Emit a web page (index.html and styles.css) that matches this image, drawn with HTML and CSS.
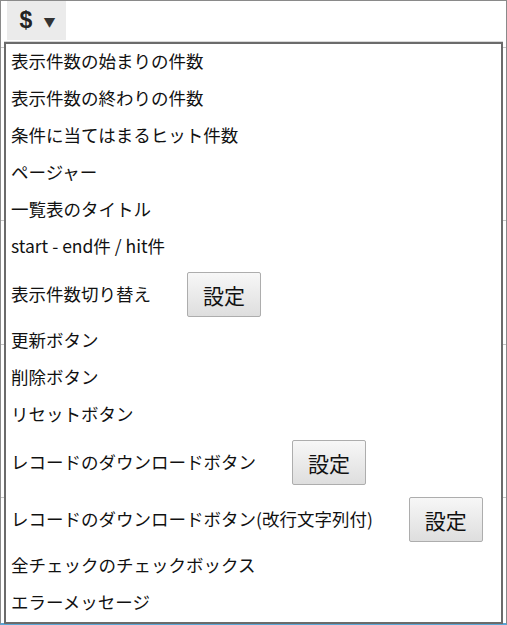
FILE: index.html
```html
<!DOCTYPE html>
<html>
<head>
<meta charset="utf-8">
<title>一覧表の部品</title>
<link rel="stylesheet" href="styles.css">
</head>
<body>
  <div class="frame">
    <div class="toolbar">
      <div class="toggle"><span class="dollar">$</span><span class="caret">▼</span></div>
    </div>

    <!-- table rows behind the menu -->
    <div class="sheet">
      <div class="sheet-row r1"></div>
      <div class="sheet-row r2"></div>
      <div class="sheet-row r3"></div>
      <div class="sheet-row r4"></div>
    </div>

    <ul class="menu">
      <li class="item">表示件数の始まりの件数</li>
      <li class="item">表示件数の終わりの件数</li>
      <li class="item">条件に当てはまるヒット件数</li>
      <li class="item">ページャー</li>
      <li class="item">一覧表のタイトル</li>
      <li class="item">start - end件 / hit件</li>
      <li class="item with-btn">表示件数切り替え<button class="btn">設定</button></li>
      <li class="item">更新ボタン</li>
      <li class="item">削除ボタン</li>
      <li class="item">リセットボタン</li>
      <li class="item with-btn">レコードのダウンロードボタン<button class="btn">設定</button></li>
      <li class="item with-btn">レコードのダウンロードボタン(改行文字列付)<button class="btn">設定</button></li>
      <li class="item">全チェックのチェックボックス</li>
      <li class="item">エラーメッセージ</li>
    </ul>
  </div>
</body>
</html>
```

FILE: styles.css
```css
html, body {
  margin: 0;
  padding: 0;
  width: 507px;
  height: 625px;
  overflow: hidden;
  background: #fff;
}
body {
  font-family: "Noto Sans CJK JP", "Noto Sans", sans-serif;
  color: #111;
}
.frame {
  position: relative;
  box-sizing: border-box;
  height: 625px;
  border: 1px solid #8a8a8a;
  border-bottom: 2px solid #5aa6d6;
}
.toolbar {
  display: flex;
  padding-left: 6px;
}
.toggle {
  width: 59px;
  height: 39px;
  background: #ebebeb;
  display: flex;
  align-items: center;
  justify-content: center;
  gap: 11px;
}
.dollar {
  font-family: "Liberation Sans", Arial, sans-serif;
  font-size: 23px;
  font-weight: bold;
  color: #222;
  margin-left: 2px;
}
.caret {
  font-size: 12px;
  color: #333;
  margin-top: 1px;
}
.sheet-row {
  position: absolute;
  left: 0;
  right: 0;
  border-top: 1px solid #c4c4c4;
}
.r1 { top: 46px; }
.r2 { top: 219px; }
.r3 { top: 343px; }
.r4 { top: 496px; }

.menu {
  position: absolute;
  left: 3px;
  top: 41px;
  width: 499px;
  box-sizing: border-box;
  margin: 0;
  padding: 0;
  list-style: none;
  background: #fff;
  border: 2px solid #6b6b6b;
  box-shadow: 0 -1px 0 #d8d8d8;
}
.item {
  display: flex;
  align-items: center;
  box-sizing: border-box;
  height: 37px;
  padding: 0 5px 5px;
  font-size: 17.5px;
  line-height: 21px;
  white-space: nowrap;
}
.item.with-btn {
  height: 57px;
  padding-top: 1px;
  padding-bottom: 4px;
}
.btn {
  margin-left: 36px;
  margin-top: 3px;
  width: 74px;
  height: 45px;
  font-family: "Noto Sans CJK JP", sans-serif;
  font-size: 21px;
  color: #111;
  background: linear-gradient(#f7f7f7, #dedede);
  border: 1px solid #adadad;
  border-radius: 2px;
  padding: 0;
}
```
